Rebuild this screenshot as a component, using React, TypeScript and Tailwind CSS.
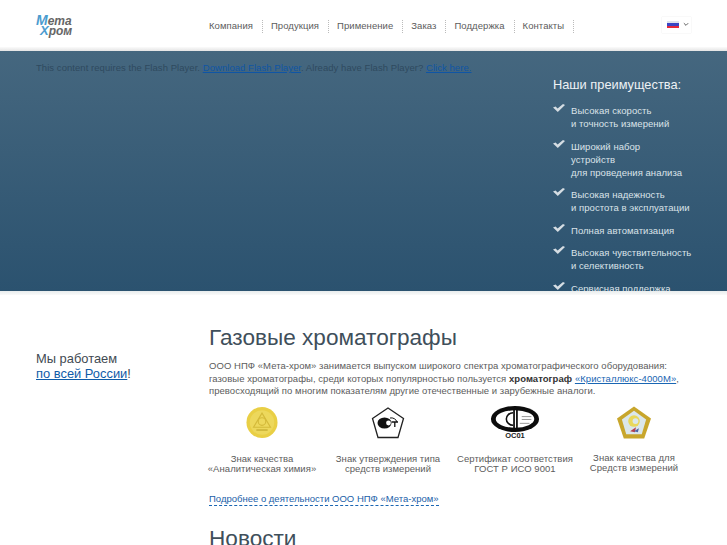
const NAV = ['Компания', 'Продукция', 'Применение', 'Заказ', 'Поддержка', 'Контакты'];

const ADVANTAGES = [
  ['Высокая скорость', 'и точность измерений'],
  ['Широкий набор', 'устройств', 'для проведения анализа'],
  ['Высокая надежность', 'и простота в эксплуатации'],
  ['Полная автоматизация'],
  ['Высокая чувствительность', 'и селективность'],
  ['Сервисная поддержка'],
];

function Logo() {
  return (
    <div className="w-[38px] h-[22px] italic font-bold text-[12px] leading-[10px] text-[#666]">
      <div className="flex items-baseline">
        <span className="text-[#4b9ccf] text-[14px] leading-[10px]">М</span>
        <span>ета</span>
      </div>
      <div className="flex items-baseline pl-[4px]">
        <span className="text-[#4b9ccf] text-[13px] leading-[10px]">Х</span>
        <span>ром</span>
      </div>
    </div>
  );
}

function Check() {
  return (
    <svg width="12" height="8" viewBox="0 0 12 8" className="shrink-0 mt-[0px]">
      <path d="M0 3.6 L2.6 2.4 L4.6 4.4 L10 0 L12 1 L4.8 8 Z" fill="#d5dde3" />
    </svg>
  );
}

function GoldMedal() {
  return (
    <svg width="32" height="33" viewBox="0 0 34 34">
      <circle cx="17" cy="17" r="16.5" fill="#e9cf45" />
      <circle cx="17" cy="17" r="13" fill="#edd85c" />
      <path d="M17 7 L26 22 L8 22 Z" fill="none" stroke="#d4ba3a" strokeWidth="1.2" />
      <circle cx="17" cy="16" r="4" fill="none" stroke="#d4ba3a" strokeWidth="1.2" />
      <path d="M11 25 H23" stroke="#c7af33" strokeWidth="1.5" />
    </svg>
  );
}

function RstMark() {
  return (
    <svg width="34" height="32" viewBox="0 0 34 32">
      <path d="M17 1 L32.5 11.5 L27 30.5 H7 L1.5 11.5 Z" fill="#fff" stroke="#222" strokeWidth="1.3" />
      <ellipse cx="13.5" cy="16" rx="7" ry="5.6" fill="#111" />
      <circle cx="17.5" cy="16" r="2.4" fill="#fff" />
      <path d="M19 11 A6 6 0 0 1 26 15" fill="none" stroke="#111" strokeWidth="1" />
      <path d="M20.5 15 H27 M23.8 15 V20" stroke="#111" strokeWidth="1.3" />
    </svg>
  );
}

function GostMark() {
  return (
    <div className="flex flex-col items-center">
      <svg width="50" height="26" viewBox="0 0 50 27">
        <ellipse cx="25" cy="13.5" rx="25" ry="13.5" fill="#0c0c0c" />
        <ellipse cx="25" cy="13.5" rx="20" ry="9" fill="#fff" />
        <path d="M16 3 H33 M24 3 V25 M27 3 V25" stroke="#0c0c0c" strokeWidth="1.8" />
        <path d="M23 7 A7 6.5 0 0 0 23 20" fill="none" stroke="#0c0c0c" strokeWidth="1.6" />
        <path d="M32 11 H42 M32 14 H42 M30 18 H40" stroke="#888" strokeWidth="0.9" />
      </svg>
      <span className="text-[7.5px] leading-[8px] font-bold text-[#222]">ОС01</span>
    </div>
  );
}

function PentagonMedal() {
  return (
    <svg width="36" height="33" viewBox="0 0 36 34">
      <path d="M18 0.5 L35.5 13 L28.5 33.5 H7.5 L0.5 13 Z" fill="#c8a62c" />
      <path d="M18 5 L30.5 14 L26 29 H10 L5.5 14 Z" fill="#dbe7ea" />
      <circle cx="18" cy="15.5" r="6" fill="#e9d85a" />
      <circle cx="19.5" cy="15.5" r="3" fill="#dbe7ea" />
      <path d="M14 26 L20 22 L19 27 Z" fill="#b5404e" />
      <path d="M18 26 L23 23 L22 27 Z" fill="#4a63a8" />
    </svg>
  );
}

const BADGES = [
  { mark: <GoldMedal />, lines: ['Знак качества', '«Аналитическая химия»'], width: 'w-[106px]', top: 'mt-[14px]' },
  { mark: <RstMark />, lines: ['Знак утверждения типа', 'средств измерений'], width: 'w-[146px]', top: 'mt-[14px]' },
  { mark: <GostMark />, lines: ['Сертификат соответствия', 'ГОСТ Р ИСО 9001'], width: 'w-[108px]', top: 'mt-[14px]' },
  { mark: <PentagonMedal />, lines: ['Знак качества для', 'Средств измерений'], width: 'w-[130px]', top: 'mt-[13px]' },
];

export default function App() {
  return (
    <div className="w-[727px] h-[545px] overflow-hidden bg-white font-['Liberation_Sans',Arial,sans-serif]">
      <header className="h-[47px] flex items-center pl-[36px] bg-white">
        <div className="w-[173px] pt-[4px]">
          <Logo />
        </div>
        <nav className="flex items-center pt-[6px] text-[9.5px] text-[#5c5c5c] tracking-[0.06px]">
          {NAV.map((item) => (
            <span key={item} className="flex items-center">
              <span>{item}</span>
              <span className="ml-[9px] mr-[8px] h-[13px] border-r border-dotted border-[#bbb]" />
            </span>
          ))}
        </nav>
        <div className="ml-auto mr-[36px] mt-[2px] flex items-center gap-[4px] w-[29px] h-[16px] pl-[5px] bg-white shadow-[0_0_1px_#ddd]">
          <span className="flex flex-col w-[12px] h-[7px]">
            <span className="h-[2px] bg-[#dfe3ee]" />
            <span className="h-[3px] bg-[#3a45c4]" />
            <span className="h-[2px] bg-[#e5283a]" />
          </span>
          <svg width="6" height="5" viewBox="0 0 7 5">
            <path d="M1 1 L3.5 3.5 L6 1" fill="none" stroke="#555" strokeWidth="1.1" />
          </svg>
        </div>
      </header>
      <div className="h-[4px] bg-gradient-to-b from-[#fbfbfb] to-[#e4e4e4]" />

      <section className="h-[240px] overflow-hidden flex pl-[36px] bg-gradient-to-b from-[#45677f] to-[#2b526f]">
        <p className="w-[517px] shrink-0 pt-[10px] text-[9.5px] leading-[13px] tracking-[0.05px] text-[#2f4a5f] whitespace-nowrap">
          This content requires the Flash Player.{' '}
          <a href="#" className="underline text-[#0f55a5]">Download Flash Player</a>
          . Already have Flash Player?{' '}
          <a href="#" className="underline text-[#0f55a5]">Click here.</a>
        </p>
        <div className="pt-[26px] text-[#dbe3e9]">
          <h2 className="text-[12.8px] leading-[16px] text-[#eef2f5]">Наши преимущества:</h2>
          <ul className="mt-[11px] flex flex-col gap-[9.5px] text-[9.5px] leading-[13px] tracking-[0.05px]">
            {ADVANTAGES.map((lines) => (
              <li key={lines[0]} className="flex gap-[6px] whitespace-nowrap">
                <Check />
                <span>
                  {lines.map((line) => (
                    <span key={line} className="block">{line}</span>
                  ))}
                </span>
              </li>
            ))}
          </ul>
        </div>
      </section>
      <div className="h-[4px] bg-gradient-to-b from-[#e8eced] to-[#fafafa]" />

      <main className="flex pl-[36px]">
        <div className="w-[173px] shrink-0 pt-[57px] text-[12.9px] leading-[14.5px] text-[#3f4a52]">
          Мы работаем
          <br />
          <a href="#" className="underline text-[#0f5ca8]">по всей России</a>!
        </div>
        <div className="w-[490px] shrink-0 pt-[28px]">
          <h1 className="text-[22.6px] leading-[30px] text-[#3f4f5b]">Газовые хроматографы</h1>
          <p className="mt-[7px] text-[9.5px] leading-[12.5px] tracking-[0.05px] text-[#5c5c5c] whitespace-nowrap">
            ООО НПФ «Мета-хром» занимается выпуском широкого спектра хроматографического оборудования:
            <br />
            газовые хроматографы, среди которых популярностью пользуется{' '}
            <b className="text-[#333]">хроматограф</b>{' '}
            <a href="#" className="underline text-[#1a66b3]">«Кристаллюкс-4000М»</a>,
            <br />
            превосходящий по многим показателям другие отечественные и зарубежные аналоги.
          </p>
          <div className="mt-[8px] flex items-start h-[70px]">
            {BADGES.map((badge) => (
              <div key={badge.lines[0]} className={`${badge.width} flex flex-col items-center shrink-0`}>
                <div className="h-[34px] flex items-center">{badge.mark}</div>
                <div className={`${badge.top} text-[9.5px] leading-[10.5px] tracking-[0.05px] text-center text-[#5c5c5c] whitespace-nowrap`}>
                  {badge.lines.map((line) => (
                    <div key={line}>{line}</div>
                  ))}
                </div>
              </div>
            ))}
          </div>
          <a href="#" className="inline-block mt-[16px] text-[9.5px] leading-[13px] text-[#1a5ea8] border-b border-dashed border-[#1a66b3]">
            Подробнее о деятельности ООО НПФ «Мета-хром»
          </a>
          <h2 className="mt-[15px] text-[22.6px] leading-[30px] text-[#3f4f5b]">Новости</h2>
        </div>
      </main>
    </div>
  );
}
